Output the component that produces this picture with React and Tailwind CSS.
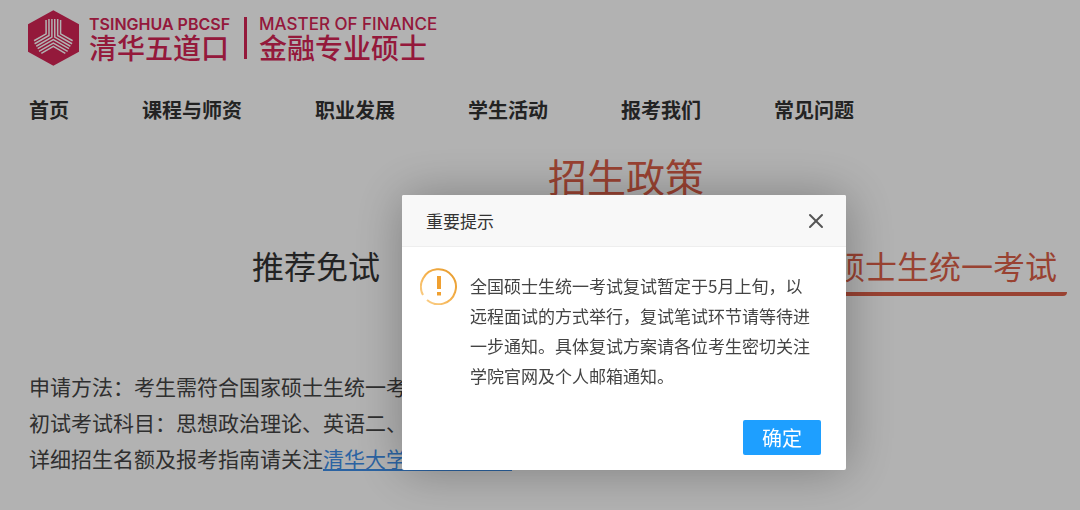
import React, { useState } from 'react';
import { X } from 'lucide-react';

const NAV_ITEMS = ['首页', '课程与师资', '职业发展', '学生活动', '报考我们', '常见问题'];

const LogoMark = () => (
    <svg viewBox="27 32 153 166" className="w-[51px] h-14 shrink-0" aria-hidden="true">
        <path d="M103 32 180 74V156L103 198 27 156V74Z" fill="#d42455" />
        {/* Three sets of nested chevrons turned around the centre */}
        <g fill="none" stroke="#fff" strokeWidth="4.5">
            {[0, 120, 240].map((angle) => (
                <g key={angle} transform={`rotate(${angle} 103 115)`}>
                    <path d="M56 147 103 120 150 147" />
                    <path d="M60 155 103 130 146 155" />
                    <path d="M67 161 103 140 139 161" />
                </g>
            ))}
        </g>
    </svg>
);

const Header = () => (
    <header>
        <a href="#home" className="flex w-fit items-center pl-7 pt-2.5 text-[#d42455]">
            <LogoMark />
            <span className="ml-2.5 flex flex-col pb-0.5">
                <span className="text-[16px] leading-5 font-semibold font-['Inter','Liberation_Sans',sans-serif]">TSINGHUA PBCSF</span>
                <span className="text-[28px] leading-[26px] font-medium">清华五道口</span>
            </span>
            <span className="ml-3.5 h-[42px] w-[3px] bg-[#d42455]" />
            <span className="ml-3 flex flex-col pb-0.5">
                <span className="text-[17px] leading-5 font-medium font-['Inter','Liberation_Sans',sans-serif]">MASTER OF FINANCE</span>
                <span className="text-[28px] leading-[26px] font-medium">金融专业硕士</span>
            </span>
        </a>

        <nav className="flex gap-[73px] pl-[29px] pt-7">
            {NAV_ITEMS.map((item) => (
                <a key={item} href="#nav" className="shrink-0 text-[20px] leading-8 font-bold text-[#333]">{item}</a>
            ))}
        </nav>
    </header>
);

const Policy = () => (
    <main>
        <h1 className="pl-[172px] pt-[22px] text-center text-[39px] leading-[54px] text-[#dc5f48]">招生政策</h1>

        <div className="flex justify-between pl-[252px] pr-[13px] pt-9 text-[32px] leading-[54px]">
            <button type="button" className="h-fit shrink-0 text-[#333]">推荐免试</button>
            <button type="button" className="shrink-0 rounded-sm border-b-4 border-[#dc5f48] px-2.5 text-[#dc5f48]">
                全国硕士生统一考试
            </button>
        </div>

        <div className="pl-[29px] pt-[72px] text-[21px] leading-9 text-[#444] whitespace-nowrap">
            <p>申请方法：考生需符合国家硕士生统一考试</p>
            <p>初试考试科目：思想政治理论、英语二、数学</p>
            <p>详细招生名额及报考指南请关注<a href="#guide" className="text-[#3e8ee8] underline">清华大学研究生招生</a></p>
        </div>
    </main>
);

const WarningIcon = () => (
    <svg viewBox="0 0 38 38" className="size-[38px] shrink-0" aria-hidden="true">
        <defs>
            <linearGradient id="ring" x1="0" y1="1" x2="1" y2="0">
                <stop offset="0" stopColor="#fbd596" />
                <stop offset="0.5" stopColor="#f5b14c" />
                <stop offset="1" stopColor="#e59a2c" />
            </linearGradient>
        </defs>
        <path d="M3 28A17.500 17.500 0 1 1 7 33" fill="none" stroke="url(#ring)" strokeWidth="2" />
        <path d="M17 9H21V22H17Z" fill="#f0a030" />
        <path d="M17 25H21V28.500H17Z" fill="#f0a030" />
    </svg>
);

const NoticeDialog = ({ onClose }) => (
    <div className="fixed inset-0 flex items-start justify-center bg-black/30 pl-[168px] pt-[195px]">
        <div role="dialog" aria-modal="true" aria-labelledby="notice-title"
            className="w-[444px] rounded-xs bg-white shadow-[1px_1px_50px_rgba(0,0,0,0.3)]">
            <div className="flex items-center justify-between rounded-t-xs border-b border-[#eee] bg-[#f8f8f8] pl-6 pr-[18px]">
                <h2 id="notice-title" className="text-[17px] leading-[51px] text-[#333]">重要提示</h2>
                <button type="button" aria-label="关闭" onClick={onClose} className="text-[#555]">
                    <X size={24} strokeWidth={2} />
                </button>
            </div>

            <div className="flex gap-3 pl-[18px] pr-[30px] pt-5">
                <WarningIcon />
                <p className="pt-1 text-[17px] leading-[30px] text-[#444]">
                    全国硕士生统一考试复试暂定于5月上旬，以远程面试的方式举行，复试笔试环节请等待进一步通知。具体复试方案请各位考生密切关注学院官网及个人邮箱通知。
                </p>
            </div>

            <div className="flex justify-end pb-[15px] pr-[25px] pt-[29px]">
                <button type="button" onClick={onClose} className="rounded-xs bg-[#1e9fff] px-[19px] text-[20px] leading-[35px] text-white">
                    确定
                </button>
            </div>
        </div>
    </div>
);

const App = () => {
    const [isNoticeOpen, setIsNoticeOpen] = useState(true);

    return (
        <div className="min-h-screen overflow-hidden bg-white font-['Noto_Sans_CJK_SC',sans-serif]" lang="zh-CN">
            <Header />
            <Policy />
            {isNoticeOpen && <NoticeDialog onClose={() => setIsNoticeOpen(false)} />}
        </div>
    );
};

export default App;
